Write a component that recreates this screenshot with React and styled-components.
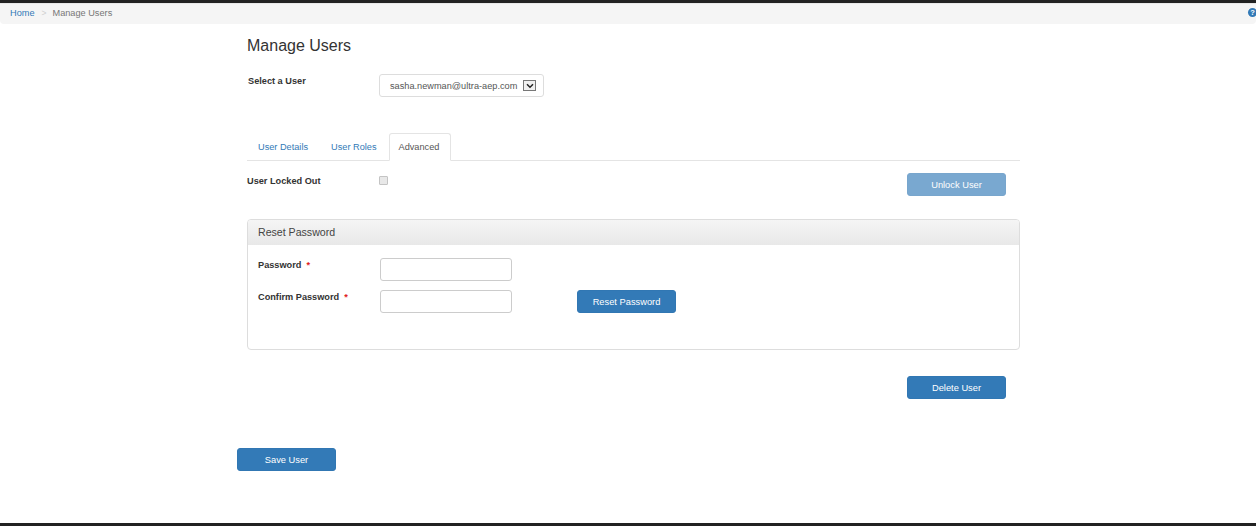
import React from 'react';
import styled, { createGlobalStyle } from 'styled-components';

const GlobalStyle = createGlobalStyle`
  html, body {
    margin: 0;
    padding: 0;
    background: #fff;
    font-family: "Liberation Sans", Arial, sans-serif;
    color: #333;
  }
  * {
    box-sizing: border-box;
  }
`;

const Page = styled.div`
  height: 526px;
  display: flex;
  flex-direction: column;
  border-top: 3px solid #222;
  border-bottom: 3px solid #222;
  overflow: hidden;
`;

const Breadcrumb = styled.nav`
  height: 21px;
  flex: none;
  display: flex;
  align-items: center;
  padding: 0 0 3px 10px;
  background: #f5f5f5;
  border-top: 1px solid #e8e8e8;
  border-radius: 0 0 4px 4px;
  font-size: 9.2px;
  overflow: hidden;
`;

const CrumbLink = styled.a`
  color: #337ab7;
`;

const CrumbSeparator = styled.span`
  color: #d0d0d0;
  margin: 0 6px 0 7px;
  font-size: 8.5px;
`;

const CrumbCurrent = styled.span`
  color: #777;
`;

const HelpIcon = styled.span`
  flex: none;
  margin-left: auto;
  margin-right: -1px;
  width: 9px;
  height: 9px;
  border-radius: 50%;
  background: #337ab7;
  color: #fff;
  font-size: 7.5px;
  font-weight: bold;
  line-height: 9px;
  text-align: center;
`;

const Main = styled.main`
  width: 773px;
  margin-left: 247px;
  padding-top: 13px;
`;

const Title = styled.h1`
  margin: 0;
  font-size: 16px;
  font-weight: normal;
  line-height: 18px;
  color: #333;
`;

const Label = styled.label`
  display: block;
  margin-top: ${(p) => p.$offset || '0'};
  font-size: 9.2px;
  font-weight: bold;
  line-height: 12px;
  color: #333;
  white-space: nowrap;
`;

const UserRow = styled.div`
  display: grid;
  grid-template-columns: 131px auto;
  justify-content: start;
  margin-top: 19px;
  padding-left: 1px;
`;

const SelectBox = styled.div`
  width: 165px;
  height: 23px;
  display: flex;
  align-items: center;
  justify-content: space-between;
  padding: 0 7px 0 10px;
  border: 1px solid #ddd;
  border-radius: 3px;
  font-size: 9.2px;
  color: #555;
  white-space: nowrap;
`;

const SelectArrow = styled.span`
  flex: none;
  width: 13px;
  height: 11px;
  display: flex;
  align-items: center;
  justify-content: center;
  border: 1px solid #777;
  background: #f0f0f0;
`;

const Tabs = styled.div`
  display: flex;
  align-items: flex-start;
  height: 28px;
  margin-top: 36px;
  border-bottom: 1px solid #e4e4e4;
`;

const Tab = styled.a`
  height: 28px;
  padding: ${(p) => (p.$active ? '0 11px 0 9px' : '0 10px')};
  margin-right: 1px;
  display: flex;
  align-items: center;
  font-size: 9.2px;
  color: ${(p) => (p.$active ? '#555' : '#337ab7')};
  background: ${(p) => (p.$active ? '#fff' : 'transparent')};
  border: 1px solid ${(p) => (p.$active ? '#e4e4e4' : 'transparent')};
  border-bottom-color: ${(p) => (p.$active ? '#fff' : 'transparent')};
  border-radius: 3px 3px 0 0;
`;

const LockRow = styled.div`
  display: grid;
  grid-template-columns: 132px 1fr auto;
  margin-top: 12px;
  padding-right: 14px;
`;

const LockBox = styled.span`
  width: 9px;
  height: 9px;
  margin-top: 3px;
  border: 1px solid #c4c4c4;
  border-radius: 1px;
  background: #e8e8e8;
`;

const Button = styled.button`
  width: 99px;
  height: 23px;
  padding: 0;
  font-family: inherit;
  font-size: 9.3px;
  color: #fff;
  background: #337ab7;
  border: 1px solid #3177b3;
  border-radius: 3px;
  opacity: ${(p) => (p.disabled ? 0.65 : 1)};
`;

const Panel = styled.section`
  height: 131px;
  margin-top: 23px;
  border: 1px solid #ddd;
  border-radius: 4px;
`;

const PanelHeading = styled.h2`
  margin: 0;
  height: 25px;
  padding: 0 0 2px 10px;
  display: flex;
  align-items: center;
  font-size: 10.6px;
  font-weight: normal;
  color: #444;
  background: linear-gradient(#f5f5f5, #e8e8e8);
  border-radius: 3px 3px 0 0;
`;

const PanelBody = styled.div`
  display: flex;
  flex-direction: column;
  gap: 9px;
  padding: 13px 0 0 10px;
`;

const FieldRow = styled.div`
  display: grid;
  grid-template-columns: 122px 132px 65px auto;
  justify-content: start;
`;

const Required = styled.span`
  color: #e02020;
  margin-left: 5px;
`;

const TextInput = styled.input`
  width: 132px;
  height: 23px;
  padding: 0 6px;
  border: 1px solid #ccc;
  border-radius: 3px;
  background: #fff;
  grid-column: 2;
`;

const ResetButton = styled(Button)`
  grid-column: 4;
`;

const DeleteRow = styled.div`
  display: flex;
  justify-content: flex-end;
  margin-top: 26px;
  padding-right: 14px;
`;

const SaveRow = styled.div`
  margin: 49px 0 0 -10px;
`;

export default function App() {
  return (
    <>
      <GlobalStyle />
      <Page>
        <Breadcrumb>
          <CrumbLink>Home</CrumbLink>
          <CrumbSeparator>&gt;</CrumbSeparator>
          <CrumbCurrent>Manage Users</CrumbCurrent>
          <HelpIcon>?</HelpIcon>
        </Breadcrumb>
        <Main>
          <Title>Manage Users</Title>
          <UserRow>
            <Label $offset="1px">Select a User</Label>
            <SelectBox>
              sasha.newman@ultra-aep.com
              <SelectArrow>
                <svg width="8" height="6" viewBox="0 0 8 6">
                  <path d="M1 1.2 L4 4.2 L7 1.2" fill="none" stroke="#222" strokeWidth="1.5" />
                </svg>
              </SelectArrow>
            </SelectBox>
          </UserRow>
          <Tabs>
            <Tab>User Details</Tab>
            <Tab>User Roles</Tab>
            <Tab $active>Advanced</Tab>
          </Tabs>
          <LockRow>
            <Label $offset="2px">User Locked Out</Label>
            <LockBox />
            <Button disabled>Unlock User</Button>
          </LockRow>
          <Panel>
            <PanelHeading>Reset Password</PanelHeading>
            <PanelBody>
              <FieldRow>
                <Label $offset="1px">Password<Required>*</Required></Label>
                <TextInput type="password" />
              </FieldRow>
              <FieldRow>
                <Label $offset="1px">Confirm Password<Required>*</Required></Label>
                <TextInput type="password" />
                <ResetButton>Reset Password</ResetButton>
              </FieldRow>
            </PanelBody>
          </Panel>
          <DeleteRow>
            <Button>Delete User</Button>
          </DeleteRow>
          <SaveRow>
            <Button>Save User</Button>
          </SaveRow>
        </Main>
      </Page>
    </>
  );
}
